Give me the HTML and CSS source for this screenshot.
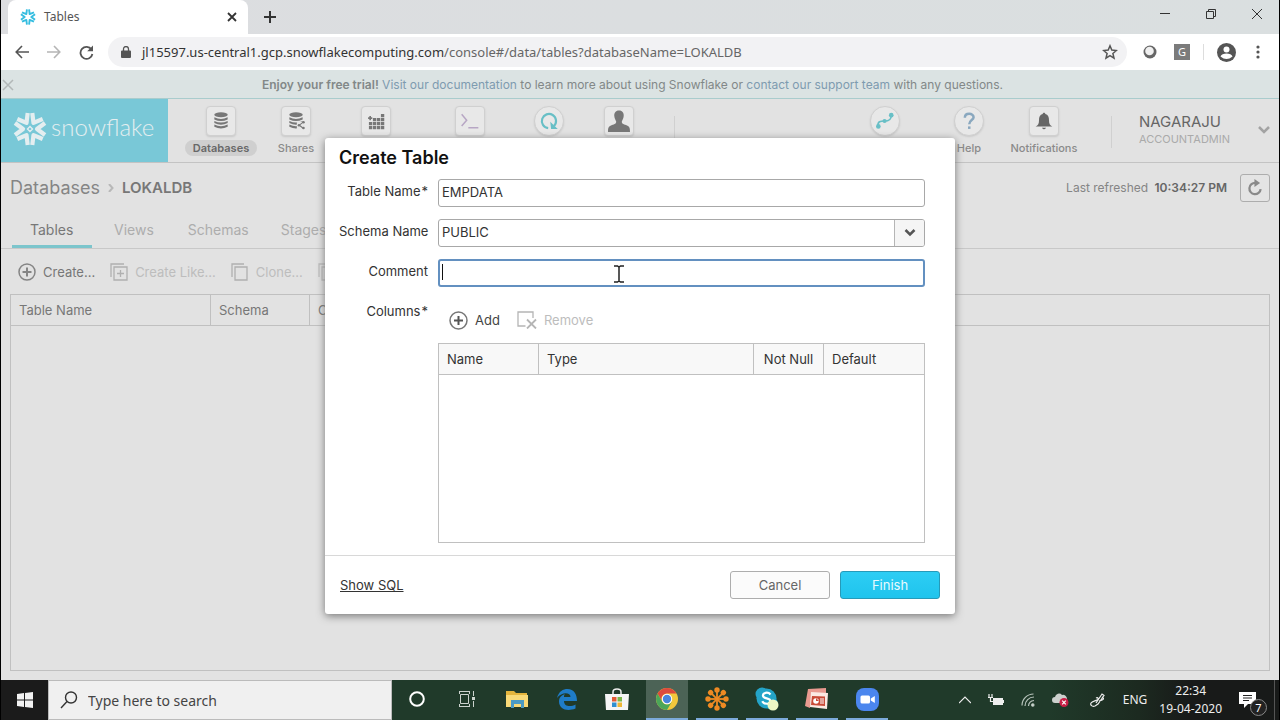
FILE: index.html
```html
<!DOCTYPE html>
<html lang="en">
<head>
<meta charset="utf-8">
<title>Tables</title>
<link rel="stylesheet" href="styles.css">
</head>
<body>
<svg class="defs" aria-hidden="true">
  <defs>
    <g id="flake" fill="none" stroke-linecap="butt" stroke-linejoin="round">
      <path id="arm" d="M-15-6L-7 0-15 6"/>
      <use href="#arm" transform="rotate(60)"/><use href="#arm" transform="rotate(120)"/>
      <use href="#arm" transform="rotate(180)"/><use href="#arm" transform="rotate(240)"/>
      <use href="#arm" transform="rotate(300)"/>
    </g>
    <g id="disks"><ellipse cx="12" cy="4.500" rx="8" ry="3"/>
      <path d="M4 7.500q8 4 16 0v2.600q-8 4-16 0zM4 11.900q8 4 16 0v2.600q-8 4-16 0zM4 16.300q8 4 16 0v2.600q-8 4-16 0z"/></g>
  </defs>
</svg>

<header class="browser">
  <div class="tabstrip">
    <div class="tab">
      <svg class="favicon" viewBox="-17 -17 34 34" stroke="#35bde0" stroke-width="4"><use href="#flake"/></svg>
      <span class="tab-title">Tables</span>
      <button class="plain" aria-label="Close tab"><svg width="10" height="10" viewBox="0 0 10 10" stroke="#333" stroke-width="1.800"><path d="M1 1l8 8M9 1L1 9"/></svg></button>
    </div>
    <button class="plain new-tab" aria-label="New tab"><svg width="12" height="12" viewBox="0 0 12 12" stroke="#333" stroke-width="2"><path d="M6 0v12M0 6h12"/></svg></button>
    <div class="window-controls">
      <button class="plain" aria-label="Minimize"><svg width="12" height="12" viewBox="0 0 12 12" stroke="#333"><path d="M1 5.500h10"/></svg></button>
      <button class="plain" aria-label="Restore"><svg width="12" height="12" viewBox="0 0 12 12" fill="none" stroke="#333"><path d="M1.500 3.500h7v7h-7zM3.500 3V1.500h7v7H9"/></svg></button>
      <button class="plain" aria-label="Close window"><svg width="12" height="12" viewBox="0 0 12 12" stroke="#333"><path d="M1 1l10 10M11 1L1 11"/></svg></button>
    </div>
  </div>
  <div class="toolbar">
    <button class="plain" aria-label="Back"><svg width="14" height="14" viewBox="0 0 14 14" fill="none" stroke="#555" stroke-width="1.600"><path d="M14 7H1.500M7 1L1.200 7 7 13"/></svg></button>
    <button class="plain" aria-label="Forward"><svg width="14" height="14" viewBox="0 0 14 14" fill="none" stroke="#b5b5b5" stroke-width="1.600"><path d="M0 7h12.500M7 1l5.800 6L7 13"/></svg></button>
    <button class="plain" aria-label="Reload"><svg width="15" height="15" viewBox="0 0 15 15" fill="none" stroke="#555" stroke-width="1.800"><path d="M12.500 4.500A6 6 0 1 0 13.400 9"/><path d="M14 .5v5.800H8.200z" fill="#555" stroke="none"/></svg></button>
    <div class="address">
      <svg width="10" height="12" viewBox="0 0 10 12"><path d="M1 4.500h8a1 1 0 0 1 1 1V11a1 1 0 0 1-1 1H1a1 1 0 0 1-1-1V5.500a1 1 0 0 1 1-1z" fill="#555"/><path d="M2.500 5V3a2.500 2.500 0 0 1 5 0v2" fill="none" stroke="#555" stroke-width="1.300"/></svg>
      <div class="url">jl15597.us-central1.gcp.snowflakecomputing.com<span class="path">/console#/data/tables?databaseName=LOKALDB</span></div>
      <button class="plain" aria-label="Bookmark"><svg width="16" height="16" viewBox="0 0 16 16" fill="none" stroke="#555" stroke-width="1.500"><path d="M8 1.800l1.800 4.300 4.600.4-3.500 3 1.100 4.600L8 11.600l-4 2.500 1.100-4.600-3.500-3 4.600-.4z"/></svg></button>
    </div>
    <div class="extensions">
      <svg width="14" height="14" viewBox="0 0 14 14"><circle cx="7" cy="7" r="6.500" fill="#666"/><circle cx="6.500" cy="6" r="4.300" fill="#f0f0f0"/></svg>
      <span class="g-badge">G</span>
    </div>
    <span class="toolbar-rule"></span>
    <button class="plain" aria-label="Profile"><svg width="19" height="19" viewBox="0 0 19 19"><circle cx="9.500" cy="9.500" r="9.500" fill="#555"/><circle cx="9.500" cy="6.500" r="3" fill="#fff"/><path d="M3.500 13.500c1-4 11-4 12 0q-6 5-12 0z" fill="#fff"/></svg></button>
    <button class="plain menu-dots" aria-label="Menu"><svg width="4" height="14" viewBox="0 0 4 14" fill="#555"><circle cx="2" cy="2" r="1.600"/><circle cx="2" cy="7" r="1.600"/><circle cx="2" cy="12" r="1.600"/></svg></button>
  </div>
</header>

<main class="app">
  <div class="trial">
    <button class="plain dismiss" aria-label="Dismiss"><svg width="12" height="12" viewBox="0 0 12 12" stroke="#b2b8b8" stroke-width="1.500"><path d="M1 1l10 10M11 1L1 11"/></svg></button>
    <p><b>Enjoy your free trial!</b> <a href="#">Visit our documentation</a> to learn more about using Snowflake or <a href="#">contact our support team</a> with any questions.</p>
  </div>

  <div class="masthead">
    <a class="brand" href="#">
      <svg width="34" height="34" viewBox="-17 -17 34 34" stroke="#e4eef0" stroke-width="4.200"><use href="#flake"/><path d="M0-2.500L2.500 0 0 2.500-2.500 0z" fill="none" stroke-width="1.400"/></svg>
      <span>snowflake</span>
    </a>
    <nav class="nav">
      <a class="nav-item w80 active" href="#"><span class="tile"><svg class="ic" viewBox="0 0 24 24" fill="#777"><use href="#disks"/></svg></span><span class="nav-label">Databases</span></a>
      <a class="nav-item w70" href="#"><span class="tile"><svg class="ic" viewBox="0 0 24 24" fill="#777"><use href="#disks"/><path d="M13 13h9v9h-9z" fill="#e6e6e6"/><path d="M21 13l-5 4 5 4" fill="none" stroke="#777" stroke-width="1.300"/><circle cx="21" cy="13.500" r="1.500"/><circle cx="15.500" cy="17" r="1.500"/><circle cx="21" cy="20.500" r="1.500"/></svg></span><span class="nav-label">Shares</span></a>
      <a class="nav-item w90" href="#" aria-label="Warehouses"><span class="tile"><svg class="ic" viewBox="0 0 24 24" fill="none" stroke="#777" stroke-width="4" stroke-dasharray="4 .8"><path d="M5.500 22V12.400M10.300 22V7.600M15.100 22V7.600M19.900 22V2.800"/><path d="M2.500 8.500h5M5 6v5" stroke-width="2" stroke-dasharray="none"/></svg></span></a>
      <a class="nav-item w98" href="#" aria-label="Worksheets"><span class="tile"><svg class="ic" viewBox="0 0 24 24" fill="none" stroke="#b7a6c4" stroke-width="1.800"><path d="M2 4l6 7-6 7M10 20h12"/></svg></span></a>
      <a class="nav-item w60" href="#" aria-label="History"><span class="tile round"><svg class="ic" viewBox="0 0 24 24" fill="none" stroke="#68bfc6" stroke-width="2.600"><path d="M11 20.500a8.500 8.500 0 1 1 7-2.500"/><path d="M13.500 13l1 8.500h8z" fill="#68bfc6" stroke="none"/></svg></span></a>
      <a class="nav-item w80" href="#" aria-label="Account"><span class="tile"><svg width="24" height="24" viewBox="0 0 24 24" fill="#777"><path d="M12 1.500c3.500 0 5 2.500 4.700 5.500-.3 3-1.400 4-1.900 5.500 0 2 1 2.500 4.700 3.700 3 1 3.500 2.500 3.500 6.800H1c0-4.300.5-5.800 3.500-6.800 3.700-1.200 4.700-1.700 4.700-3.700C8.700 11 7.600 10 7.300 7 7 4 8.500 1.500 12 1.500z"/></svg></span></a>
      <span class="nav-rule"></span>
    </nav>
    <nav class="nav nav-right">
      <a class="nav-item w90" href="#" aria-label="Partner Connect"><span class="tile round"><svg class="ic" viewBox="0 0 24 24" fill="#68bfc6"><path d="M3.500 18.500c-.5-6 3-6.500 8-6.500s8-1 8-7" fill="none" stroke="#68bfc6" stroke-width="2"/><circle cx="4" cy="18.500" r="2.800"/><circle cx="11.500" cy="12" r="2.500"/><circle cx="19.500" cy="5" r="2.800"/></svg></span></a>
      <a class="nav-item w78" href="#"><span class="tile round"><svg class="ic" viewBox="0 0 24 24" fill="none" stroke="#8aa8bf" stroke-width="3"><path d="M7 8c0-6 10.500-6 10.500-.5C17.500 11 12.300 11 12.300 16"/><path d="M12.300 18.500v3"/></svg></span><span class="nav-label">Help</span></a>
      <a class="nav-item w72" href="#"><span class="tile"><svg class="ic" viewBox="0 0 24 24" fill="#666"><path d="M12 2c1 0 1.600.7 1.600 1.600C17 4.500 18 7.500 18 11c0 4 1 6 4 7.500H2C5 17 6 15 6 11c0-3.500 1-6.500 4.400-7.400C10.400 2.700 11 2 12 2zM9.500 20h5q-2.500 4-5 0z"/></svg></span><span class="nav-label">Notifications</span></a>
      <span class="nav-rule user-rule"></span>
      <button class="plain user">
        <span class="who"><span class="user-name">NAGARAJU</span><span class="role">ACCOUNTADMIN</span></span>
        <svg width="12" height="8" viewBox="0 0 12 8" fill="none" stroke="#a3a3a3" stroke-width="2.500"><path d="M1 1l5 5 5-5"/></svg>
      </button>
    </nav>
  </div>

  <div class="crumbs">
    <a href="#">Databases</a>
    <svg width="6" height="8" viewBox="0 0 6 8" fill="none" stroke="#b8b8b8" stroke-width="2"><path d="M1 0l3.500 4L1 8"/></svg>
    <strong>LOKALDB</strong>
    <span class="refreshed">Last refreshed <b>10:34:27 PM</b></span>
    <button class="refresh" aria-label="Refresh"><svg width="18" height="18" viewBox="0 0 16 16" fill="none" stroke="#8a8a8a" stroke-width="2"><path d="M8.500 3.500a5 5 0 1 0 4.500 5.500"/><path d="M7.500 0v7l5-3.500z" fill="#8a8a8a" stroke="none"/></svg></button>
  </div>

  <nav class="tabs">
    <a class="tabs-item current" href="#">Tables</a><a class="tabs-item" href="#">Views</a><a class="tabs-item" href="#">Schemas</a><a class="tabs-item" href="#">Stages</a>
  </nav>

  <div class="actions">
    <button class="action"><svg width="18" height="18" viewBox="0 0 18 18" fill="none" stroke="#858585" stroke-width="1.500"><circle cx="9" cy="9" r="8"/><path d="M9 4.500v9M4.500 9h9" stroke-width="2"/></svg>Create...</button>
    <button class="action" disabled><svg width="18" height="18" viewBox="0 0 18 18" fill="none" stroke="#b0b0b0" stroke-width="1.300"><path d="M4 4h13v13H4zM1 14V1h13M10.500 7v7M7 10.500h7"/></svg>Create Like...</button>
    <button class="action" disabled><svg width="18" height="18" viewBox="0 0 18 18" fill="none" stroke="#b0b0b0" stroke-width="1.300"><path d="M4 4h12v13H4zM1 14V1h12"/></svg>Clone...</button>
    <button class="action" disabled aria-label="Load Table"><svg width="18" height="18" viewBox="0 0 18 18" fill="none" stroke="#bdbdbd" stroke-width="1.300"><path d="M1 14V1h12M4 4h12v13H4z"/></svg></button>
  </div>

  <div class="list">
    <table class="grid">
      <colgroup><col class="c200"><col class="c100"><col></colgroup>
      <thead><tr><th>Table Name</th><th>Schema</th><th aria-label="Creation Time">C</th></tr></thead>
    </table>
  </div>

  <div class="overlay">
    <form class="dialog" role="dialog" aria-labelledby="dialog-title">
      <div class="dialog-body">
        <h1 id="dialog-title">Create Table</h1>
        <div class="fields">
          <label for="table-name">Table Name<i>*</i></label>
          <input class="field" id="table-name" type="text" value="EMPDATA">
          <label for="schema">Schema Name</label>
          <div class="combo">
            <select class="field" id="schema"><option>PUBLIC</option></select>
            <span class="combo-arrow"><svg width="12" height="8" viewBox="0 0 12 8" fill="none" stroke="#555" stroke-width="2.500"><path d="M1.500 1L6 5.500 10.500 1"/></svg></span>
          </div>
          <label for="comment">Comment</label>
          <div class="combo">
            <input class="field focused" id="comment" type="text">
            <span class="caret"></span>
            <svg class="pointer" width="12" height="18" viewBox="0 0 12 18" fill="none" stroke="#222" stroke-width="1.500"><path d="M1 1h3.500L6 2l1.500-1H11M1 17h3.500L6 16l1.500 1H11M6 2v14"/></svg>
          </div>
          <span class="label" id="columns-label">Columns<i>*</i></span>
          <div class="columns">
            <div class="column-actions">
              <button class="action dark" type="button"><svg width="19" height="19" viewBox="0 0 19 19" fill="none" stroke="#777" stroke-width="1.500"><circle cx="9.500" cy="9.500" r="8.500"/><path d="M9.500 5v9M5 9.500h9" stroke="#555" stroke-width="2"/></svg>Add</button>
              <button class="action" type="button" disabled><svg width="20" height="18" viewBox="0 0 20 18" fill="none" stroke="#b5b5b5" stroke-width="1.300"><path d="M8.500 15H1V1h15v6"/><path d="M10 8.500l9 9M19 8.500l-9 9" stroke-width="1.800"/></svg>Remove</button>
            </div>
            <div class="column-list">
              <table class="grid" aria-labelledby="columns-label">
                <colgroup><col class="c100"><col><col class="c70"><col class="c101"></colgroup>
                <thead><tr><th>Name</th><th>Type</th><th class="centered">Not Null</th><th>Default</th></tr></thead>
              </table>
            </div>
          </div>
        </div>
      </div>
      <footer class="dialog-foot">
        <a href="#">Show SQL</a>
        <div class="buttons"><button class="btn" type="button">Cancel</button><button class="btn primary" type="button">Finish</button></div>
      </footer>
    </form>
  </div>
</main>

<footer class="taskbar">
  <button class="plain start" aria-label="Start"><svg width="16" height="16" viewBox="0 0 16 16" fill="#f2f2f2"><path d="M0 2l7-1v6.500H0zM8 .9L16 0v7.500H8zM0 8.500h7V15l-7-1zM8 8.500h8V16l-8-1z"/></svg></button>
  <label class="search"><svg width="18" height="18" viewBox="0 0 18 18" fill="none" stroke="#333" stroke-width="1.400"><circle cx="11" cy="6.500" r="5.500"/><path d="M7 10.500L1 17"/></svg><input type="text" placeholder="Type here to search" aria-label="Search"></label>
  <div class="pins">
    <button class="plain pin" aria-label="Cortana"><svg width="16" height="16" viewBox="0 0 16 16"><circle cx="8" cy="8" r="6.800" fill="none" stroke="#fff" stroke-width="2"/></svg></button>
    <button class="plain pin" aria-label="Task View"><svg width="18" height="18" viewBox="0 0 18 18" fill="none" stroke="#ccd3ce"><path d="M1 1.500h11M1 16.500h11M2.500 4.500h8v9h-8zM1.500 1v3M11.500 1v3M1.500 14v3M11.500 14v3M15.500 1v5M15.500 11v6"/><path d="M14 8.500h3" stroke-width="3"/></svg></button>
    <button class="plain pin" aria-label="File Explorer"><svg width="22" height="20" viewBox="0 0 22 20"><path d="M0 2h8l2 2h11v14H0z" fill="#e3b43d"/><path d="M0 6h22v12H0z" fill="#f8d978"/><path d="M5 11h13v8h-3v-4H8v4H5z" fill="#4a9ac4"/></svg></button>
    <button class="plain pin" aria-label="Edge"><svg width="22" height="22" viewBox="0 0 22 22"><path d="M1 10C3 3 7 1 11.500 1 18 1 21 6 21 13H8c0 6 7 6 11.500 3.500v4C11 24 3 21 3 13.500 3 9 6 7 9 6c-1 1-1 2-1 3h6.500C14.500 4 5.500 4 1 10z" fill="#1f7cc7"/></svg></button>
    <button class="plain pin" aria-label="Store"><svg width="24" height="22" viewBox="0 0 24 22"><path d="M8 8V4c0-4 8-4 8 0v4" fill="none" stroke="#eee" stroke-width="1.500"/><path d="M0 6h24l-1 16H1z" fill="#f5f5f5"/><path d="M7 9h4.500v4.500H7z" fill="#e25a35"/><path d="M12.500 9H17v4.500h-4.500z" fill="#7ab648"/><path d="M7 14.500h4.500V19H7z" fill="#2f8fd0"/><path d="M12.500 14.500H17V19h-4.500z" fill="#efb734"/></svg></button>
    <button class="plain pin open selected" aria-label="Chrome"><svg width="22" height="22" viewBox="0 0 22 22"><circle cx="11" cy="11" r="11" fill="#f3c73c"/><path d="M1.500 5.500A11 11 0 0 1 20.500 5.500H11A5.500 5.500 0 0 0 6 13.500z" fill="#dc4a3d"/><path d="M1.500 5.500A11 11 0 0 0 11 22l4.800-8.300a5.500 5.500 0 0 1-9.600 0z" fill="#4ba659"/><circle cx="11" cy="11" r="5.200" fill="#fff"/><circle cx="11" cy="11" r="4.200" fill="#4884dc"/></svg></button>
    <button class="plain pin open" aria-label="GoToMeeting"><svg width="24" height="24" viewBox="-12 -12 24 24" stroke="#ee8a23" fill="#ee8a23" stroke-width="1.800"><g id="petal"><path d="M0-10V10"/><circle cy="-9" r="1.800"/><circle cy="9" r="1.800"/></g><use href="#petal" transform="rotate(45)"/><use href="#petal" transform="rotate(90)"/><use href="#petal" transform="rotate(135)"/></svg></button>
    <button class="plain pin open" aria-label="Skype"><svg width="24" height="24" viewBox="0 0 24 24"><circle cx="7" cy="7" r="6.500" fill="#24a4c8"/><circle cx="16" cy="16" r="6.500" fill="#24a4c8"/><circle cx="11.500" cy="11.500" r="10" fill="#24a4c8"/><path d="M15.500 7.500C13 4.500 7.500 5.500 8 9c.5 3.300 7.500 1.500 7.500 5.300 0 3.400-6.500 3.200-8.300 0" fill="none" stroke="#fff" stroke-width="2.200"/><circle cx="18" cy="18" r="5.500" fill="#eef8c4"/></svg></button>
    <button class="plain pin open" aria-label="PowerPoint"><svg width="24" height="22" viewBox="0 0 24 22"><path d="M3 1l18-1v6L7 7 5 20 0 18z" fill="#e99a90"/><path d="M6 4l17 1-1 16-17-2z" fill="#fbe9e3"/><path d="M7 8l13 .5V18L6 17z" fill="#c94b38"/><circle cx="11" cy="13" r="2.800" fill="#fff"/><path d="M11 10v3h3z" fill="#c94b38"/><path d="M15 11h4M15 13h4M15 15h4" stroke="#fff"/></svg></button>
    <button class="plain pin open" aria-label="Zoom"><svg width="23" height="23" viewBox="0 0 23 23"><rect width="23" height="23" rx="8" fill="#4b86ee"/><rect x="4.500" y="7.500" width="9.500" height="8" rx="1.500" fill="#fff"/><path d="M14.800 10.500l4-2.500v7l-4-2.500z" fill="#fff"/></svg></button>
  </div>
  <div class="tray">
    <svg width="12" height="8" viewBox="0 0 12 8" fill="none" stroke="#eee" stroke-width="1.200"><path d="M0 7l6-6 6 6"/></svg>
    <svg width="16" height="12" viewBox="0 0 16 12" fill="#eee"><path d="M5 4h10v7H5zM15 6h1v3h-1z"/><path d="M1 0v3M4 0v3M0 3.500h5M2.500 4v3.500H5" fill="none" stroke="#eee" stroke-width="1.200"/></svg>
    <svg width="14" height="14" viewBox="0 0 14 14" fill="none" stroke="#b8c4bc" stroke-width="1.200"><path d="M1 12.500A11.500 11.500 0 0 1 12.500 1M4 13a9 9 0 0 1 9-9M7.500 13A6 6 0 0 1 13 7.500"/><circle cx="11.800" cy="12" r="1.200" fill="#eee"/></svg>
    <svg width="17" height="14" viewBox="0 0 17 14"><path d="M3 10a3 3 0 0 1 0-6 4 4 0 0 1 7-2 4 4 0 0 1 5 4v4z" fill="#ccd0cd"/><circle cx="12" cy="9.500" r="4.500" fill="#c81e46"/><path d="M10.200 7.700l3.600 3.600M13.800 7.700l-3.600 3.600" stroke="#fff" stroke-width="1.200"/></svg>
    <svg class="pen" width="15" height="14" viewBox="0 0 15 14" fill="none" stroke="#eee" stroke-width="1.200"><path d="M6 10L12 1l2 1.500L8 11l-3 2c-3 1-5-1-4-3 1-1.500 4-2 6-3s1-3-1-2M9 8c4-1 6-2 3-4"/></svg>
    <span class="lang">ENG</span>
    <div class="clock"><span>22:34</span><span>19-04-2020</span></div>
    <button class="plain notices" aria-label="Notifications"><svg width="17" height="16" viewBox="0 0 17 16"><path d="M0 0h17v12H9l-4 4v-4H0z" fill="#fff"/><path d="M4 3.500h9M4 6h9M4 8.500h6" stroke="#222"/></svg><span class="count">7</span></button>
  </div>
</footer>
</body>
</html>
```
FILE: styles.css
```css
* { box-sizing: border-box; }
body {
  margin: 0;
  height: 100vh;
  display: flex;
  flex-direction: column;
  border: solid #000;
  border-width: 0 1px;
  background: #e2e2e2;
  color: #777;
  font: 13px/16px Inter, "Liberation Sans", sans-serif;
  overflow: hidden;
}
a { color: inherit; text-decoration: none; }
button, input, select { font: inherit; color: inherit; }
svg { display: block; flex: none; }
.defs { position: absolute; width: 0; height: 0; }
.plain { display: flex; align-items: center; border: 0; padding: 0; background: none; }

/* Browser window */
.browser { flex: none; background: #fff; color: #444; font: 13px/20px "Noto Sans", sans-serif; }
.tabstrip { display: flex; height: 34px; padding-left: 7px; background: linear-gradient(90deg, #dcdde0, #dadfe0); }
.tab { display: flex; align-items: center; width: 240px; padding: 0 11px 0 12px; background: #fff; border-radius: 8px 8px 0 0; }
.favicon { width: 16px; height: 16px; margin-right: 8px; }
.tab-title { flex: 1; font-size: 12px; color: #555; }
.new-tab { margin-left: 16px; }
.window-controls { display: flex; gap: 34px; margin-left: auto; padding: 0 16px 6px 0; }
.toolbar { display: flex; align-items: center; height: 36px; padding: 0 19px 0 14px; }
.toolbar > .plain { margin-right: 18px; }
.address { flex: 1; display: flex; align-items: center; gap: 11px; height: 30px; padding: 0 9px 0 13px; margin-left: -4px; border-radius: 15px; background: #f2f2f4; }
.url { flex: 1; color: #333; }
.path { color: #666; }
.extensions { display: flex; align-items: center; gap: 17px; margin-left: 16px; }
.g-badge { width: 16px; height: 16px; background: #7b7b7b; color: #fff; font-size: 11px; line-height: 16px; text-align: center; }
.toolbar-rule { width: 1px; height: 16px; margin: 0 13px; background: #ddd; }
.toolbar > .menu-dots { margin-left: 2px; margin-right: 0; }

/* Console page */
.app { position: relative; flex: 1; min-height: 0; display: flex; flex-direction: column; }
.trial { display: flex; align-items: center; height: 28px; padding: 2px 28px 0 1px; background: #dbe3e3; color: #828888; font-size: 12px; }
.trial p { flex: 1; margin: 0; text-align: center; }
.trial b { font-weight: 600; }
.trial a { color: #7e9bb0; }
.masthead { display: flex; height: 65px; flex: none; border-top: 1px solid #a9cccd; border-bottom: 1px solid #c3c3c3; }
.brand { display: flex; align-items: center; gap: 4px; width: 167px; padding: 0 0 3px 12px; background: #79c8d7; color: #e4eef0; font: 300 24px/30px Lato, sans-serif; }
.brand span { padding-bottom: 4px; }
.nav { display: flex; padding: 7px 0 0 13px; }
.nav-right { margin-left: auto; padding-left: 0; }
.nav-item { display: flex; flex-direction: column; align-items: center; gap: 4px; font-size: 11px; font-weight: 500; color: #8a8a8a; }
.w60 { width: 60px; } .w70 { width: 70px; } .w72 { width: 72px; } .w78 { width: 78px; }
.w80 { width: 80px; } .w90 { width: 90px; } .w98 { width: 98px; }
.tile { display: grid; place-items: center; width: 30px; height: 30px; border: 1px solid #d0d0d0; border-radius: 4px; background: #e8e8e8; box-shadow: 0 1px 2px #c8c8c8; }
.tile.round { border-radius: 50%; }
.ic { width: 20px; height: 20px; }
.nav-label { padding: 0 8px; border-radius: 8px; }
.active { color: #686868; font-weight: 600; }
.active .nav-label { background: #cfcfcf; }
.nav-rule { width: 1px; height: 32px; margin: 10px 0 0 15px; background: #d0d0d0; }
.user-rule { margin: 10px 27px 0 31px; }
.user { align-self: flex-start; gap: 28px; padding: 7px 9px 0 0; text-align: left; }
.who { display: flex; flex-direction: column; gap: 1px; }
.user-name { font-size: 15px; line-height: 17px; color: #666; }
.role { font-size: 11px; color: #aaa; }
.crumbs { display: flex; align-items: center; gap: 8px; padding: 11px 9px 0; font-size: 18px; line-height: 22px; color: #858585; }
.crumbs strong { font-size: 15px; font-weight: 600; color: #777; }
.refreshed { margin-left: auto; font-size: 12px; }
.refreshed b { margin-left: 3px; font-weight: 600; color: #666; }
.refresh { display: grid; place-items: center; width: 30px; height: 28px; margin-left: 5px; padding: 0; border: 1px solid #adadad; border-radius: 3px; background: #e4e4e4; }
.tabs { display: flex; height: 47px; padding: 8px 11px 0; border-bottom: 1px solid #c8c8c8; font-size: 14px; color: #adadad; }
.tabs-item { padding: 12px 20px 0 22px; }
.tabs-item:nth-child(3) { padding-left: 14px; }
.tabs-item:nth-child(4) { padding-left: 12px; }
.current { width: 80px; padding-left: 18px; padding-right: 0; border-bottom: 3px solid #7cc5cc; color: #777; }
.actions { display: flex; gap: 15px; padding: 13px 17px 12px; }
.action { display: flex; align-items: center; gap: 7px; padding: 0; border: 0; background: none; line-height: 20px; color: #777; }
.action:disabled { color: #bdbdbd; }
.list { flex: 1; margin: 0 9px 9px; border: 1px solid #c0c0c0; }
.grid { width: 100%; border-collapse: separate; border-spacing: 0; table-layout: fixed; }
.grid th { height: 31px; padding: 0 8px; border: solid #c0c0c0; border-width: 0 0 1px 1px; text-align: left; font-weight: 400; white-space: nowrap; }
.grid th:first-child { border-left: 0; }
.grid .centered { padding: 0; text-align: center; }
.c200 { width: 199px; } .c100 { width: 99px; } .c70 { width: 70px; } .c101 { width: 101px; }

/* Create Table dialog */
.overlay { position: absolute; inset: 2px 0 0; display: grid; place-items: center; }
.dialog { width: 630px; background: #fff; border-radius: 3px; box-shadow: 0 2px 8px #777; color: #333; }
.dialog-body { padding: 9px 30px 12px 14px; border-bottom: 1px solid #d8d8d8; }
.dialog h1 { margin: 0 0 10px; font-size: 18px; line-height: 22px; font-weight: 600; color: #111; }
.fields { display: grid; grid-template-columns: 89px 1fr; gap: 12px 10px; }
.fields > label, .label { padding-top: 4px; text-align: right; white-space: nowrap; }
.fields i { margin-left: 1px; font-style: normal; }
.field { display: block; width: 100%; height: 28px; padding: 0 3px 2px; border: 1px solid #a8a8a8; border-radius: 3px; background: #fff; outline: none; appearance: none; }
.focused { border: 2px solid #6390c0; }
.combo { position: relative; }
.combo-arrow { position: absolute; inset: 1px 1px 1px auto; display: grid; place-items: center; width: 30px; border-left: 1px solid #b5b5b5; border-radius: 0 2px 2px 0; background: #f5f5f5; pointer-events: none; }
.caret { position: absolute; left: 4px; top: 5px; width: 1px; height: 16px; background: #111; }
.pointer { position: absolute; left: 175px; top: 6px; }
.column-actions { display: flex; gap: 17px; padding: 11px 11px 13px; }
.dark { color: #444; }
.column-list { height: 200px; border: 1px solid #c0c0c0; }
.column-list th { background: #f8f8f8; }
.dialog-foot { display: flex; align-items: center; justify-content: space-between; padding: 15px; }
.dialog-foot a { text-decoration: underline; }
.buttons { display: flex; gap: 10px; }
.btn { width: 100px; height: 28px; padding: 0; border: 1px solid #adadad; border-radius: 3px; background: #fbfbfb; color: #666; }
.primary { border-color: #269ab9; background: linear-gradient(#2dcdf4, #1fc4ed); color: #e8faff; }

/* Taskbar */
.taskbar { flex: none; display: flex; height: 40px; background: linear-gradient(90deg, #203a2a 0 82%, #1c2a20 89%, #181a19 93%); color: #eee; font: 12px/18px "Noto Sans", sans-serif; }
.start { justify-content: center; width: 47px; background: #1b1b1b; }
.search { display: flex; align-items: center; gap: 10px; width: 344px; padding-left: 11px; border: 1px solid #bbb; background: #f0f0f0; color: #444; }
.search input { width: 240px; padding: 2px 0 0; border: 0; background: none; outline: none; font-size: 14px; }
.search input::placeholder { color: #444; opacity: 1; }
.pins { display: flex; }
.pin { justify-content: center; width: 42px; margin: 0 4px; border-bottom: 2px solid transparent; }
.open { border-color: #7caadb; }
.selected { background: #4c6356; }
.tray { display: flex; align-items: center; gap: 17px; margin-left: auto; padding-right: 4px; }
.pen { margin: 0 1px 0 4px; }
.clock { display: flex; flex-direction: column; align-items: center; margin-left: -5px; }
.notices { position: relative; align-self: stretch; padding-right: 18px; border-right: 1px solid #555; }
.count { position: absolute; left: 11px; top: 19px; width: 17px; height: 17px; border: 1px solid #888; border-radius: 50%; background: #222; color: #fff; font-size: 11px; line-height: 15px; text-align: center; }
```
